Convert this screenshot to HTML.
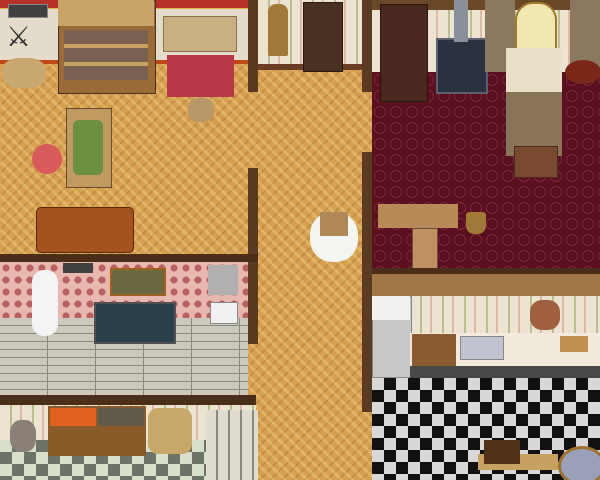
<!DOCTYPE html>
<html><head><style>
*{margin:0;padding:0}
html,body{width:600px;height:480px;overflow:hidden}
body{position:relative;background:#d49a4c}
div{position:absolute}
.wood{background-color:#d6a050;background-image:repeating-linear-gradient(45deg,rgba(255,230,160,.28) 0 3px,transparent 3px 8px),repeating-linear-gradient(-45deg,rgba(120,70,20,.2) 0 2px,transparent 2px 8px)}
.wallp{background-color:#ece4d0;background-image:repeating-linear-gradient(90deg,#ece4d0 0 10px,#b8c090 10px 12px,#ece4d0 12px 20px,#e0b8a8 20px 22px)}
.wallb{background:#5a3a22}
.carpet{background-color:#5a1020;background-image:radial-gradient(circle,transparent 5px,#7e2a3a 5px 6px,transparent 6px);background-size:16px 16px}
.chk{background:conic-gradient(#111 25%,#d8d8d8 0 50%,#111 0 75%,#d8d8d8 0);background-size:24px 24px}
.chk2{background:conic-gradient(#6c7468 25%,#d8e0cc 0 50%,#6c7468 0 75%,#d8e0cc 0);background-size:24px 24px}
</style></head><body>
<div class="wood" style="left:0;top:0;width:600px;height:480px"></div>
<div style="left:0;top:0;width:250px;height:62px;background:#e4dccb"></div>
<div style="left:0;top:0;width:250px;height:8px;background:#b8302a;border-bottom:1px solid #e0b040"></div>
<div style="left:0;top:60px;width:250px;height:4px;background:#c04818"></div>
<div style="left:8px;top:4px;width:38px;height:12px;background:#404040;border:1px solid #888"></div>
<div style="left:6px;top:22px;width:44px;height:30px;color:#333;font:28px 'DejaVu Sans',sans-serif;line-height:30px">⚔</div>
<div style="left:2px;top:58px;width:44px;height:30px;background:#c8a870;border-radius:40%"></div>
<div style="left:58px;top:0;width:96px;height:92px;background:#9a6a38;border:1px solid #4a3018"></div>
<div style="left:58px;top:0;width:96px;height:26px;background:#c8a468"></div>
<div style="left:64px;top:30px;width:84px;height:50px;background:repeating-linear-gradient(180deg,#7a6050 0 14px,#c8a060 14px 18px)"></div>
<div style="left:163px;top:16px;width:72px;height:34px;background:#c8b080;border:1px solid #8a7050"></div>
<div style="left:167px;top:55px;width:67px;height:42px;background:#b83848"></div>
<div style="left:188px;top:98px;width:26px;height:24px;background:#b89868;border-radius:40%"></div>
<div style="left:66px;top:108px;width:44px;height:78px;background:#c09a60;border:1px solid #6a4a28"></div>
<div style="left:73px;top:120px;width:30px;height:55px;background:#6a9040;border-radius:6px"></div>
<div style="left:32px;top:144px;width:30px;height:30px;background:#d85a5a;border-radius:50%"></div>
<div style="left:36px;top:207px;width:96px;height:44px;background:#a4521e;border-radius:5px;border:1px solid #5a2808"></div>
<div class="wallp" style="left:258px;top:0;width:104px;height:66px"></div>
<div style="left:258px;top:64px;width:104px;height:6px;background:#6a3e24"></div>
<div style="left:268px;top:4px;width:20px;height:52px;background:#a07838;border-radius:8px 8px 2px 2px"></div>
<div style="left:303px;top:2px;width:38px;height:68px;background:#4a3020;border:1px solid #2a1a10"></div>
<div class="wallb" style="left:248px;top:0;width:10px;height:92px"></div>
<div class="wallb" style="left:248px;top:168px;width:10px;height:176px"></div>
<div class="wallb" style="left:362px;top:0;width:10px;height:92px"></div>
<div class="wallb" style="left:362px;top:152px;width:10px;height:260px"></div>
<div style="left:310px;top:212px;width:48px;height:50px;background:#f4f4f0;border-radius:45%"></div>
<div style="left:320px;top:212px;width:28px;height:24px;background:#b08858"></div>
<div class="wallp" style="left:372px;top:0;width:228px;height:72px"></div>
<div style="left:372px;top:0;width:228px;height:10px;background:#6a4828"></div>
<div class="carpet" style="left:372px;top:72px;width:228px;height:198px"></div>
<div style="left:380px;top:4px;width:46px;height:96px;background:#4a2a20;border:1px solid #2a1610"></div>
<div style="left:436px;top:38px;width:48px;height:52px;background:#2a3240;border:2px solid #5a6070"></div>
<div style="left:454px;top:0;width:14px;height:42px;background:#8a909a"></div>
<div style="left:485px;top:0;width:30px;height:72px;background:#8a7860"></div>
<div style="left:570px;top:0;width:30px;height:70px;background:#8a7860"></div>
<div style="left:515px;top:2px;width:38px;height:44px;background:#f0e8b0;border:2px solid #a07828;border-radius:18px 18px 0 0"></div>
<div style="left:506px;top:48px;width:56px;height:108px;background:#8a7458"></div>
<div style="left:506px;top:48px;width:56px;height:44px;background:#e8e0c8"></div>
<div style="left:514px;top:146px;width:42px;height:30px;background:#7a4a30;border:1px solid #4a2a18"></div>
<div style="left:565px;top:60px;width:36px;height:24px;background:#7a2818;border-radius:50%"></div>
<div style="left:378px;top:204px;width:80px;height:24px;background:#b88a58"></div>
<div style="left:412px;top:228px;width:24px;height:40px;background:#c09060;border:1px solid #6a5040"></div>
<div style="left:466px;top:212px;width:20px;height:22px;background:#a07838;border-radius:3px 3px 8px 8px"></div>
<div style="left:372px;top:268px;width:228px;height:6px;background:#4a2e1a"></div>
<div style="left:372px;top:274px;width:228px;height:22px;background:#a07848"></div>
<div class="wallp" style="left:410px;top:296px;width:190px;height:38px"></div>
<div style="left:372px;top:296px;width:38px;height:80px;background:#c8c8c8;border:1px solid #888"></div>
<div style="left:372px;top:296px;width:38px;height:24px;background:#f0f0f0"></div>
<div style="left:410px;top:333px;width:190px;height:36px;background:#f2eadc"></div>
<div style="left:412px;top:334px;width:44px;height:44px;background:#8a5a30"></div>
<div style="left:460px;top:336px;width:42px;height:22px;background:#c0c4d0;border:1px solid #888"></div>
<div style="left:410px;top:366px;width:190px;height:12px;background:#484848"></div>
<div style="left:530px;top:300px;width:30px;height:30px;background:#a06040;border-radius:40%"></div>
<div style="left:560px;top:336px;width:28px;height:16px;background:#c09050"></div>
<div class="chk" style="left:372px;top:378px;width:228px;height:102px"></div>
<div style="left:478px;top:454px;width:80px;height:16px;background:#c8a060"></div>
<div style="left:484px;top:440px;width:36px;height:24px;background:#503018"></div>
<div style="left:558px;top:446px;width:42px;height:34px;background:#9aa0b8;border:3px solid #a07030;border-radius:50%"></div>
<div style="left:0;top:254px;width:258px;height:8px;background:#4a2e1a"></div>
<div style="left:0;top:262px;width:248px;height:56px;background-color:#e8b8b0;background-image:radial-gradient(circle,#b86060 3px,transparent 4px);background-size:12px 12px"></div>
<div style="left:0;top:318px;width:248px;height:78px;background-color:#cccabc;background-image:repeating-linear-gradient(180deg,transparent 0 7px,#8a8a80 7px 8px),repeating-linear-gradient(90deg,transparent 0 47px,#8a8a80 47px 48px)"></div>
<div style="left:63px;top:263px;width:30px;height:10px;background:#404040"></div>
<div style="left:32px;top:270px;width:26px;height:66px;background:#f4f4f4;border-radius:12px"></div>
<div style="left:110px;top:268px;width:52px;height:24px;background:#6a6840;border:2px solid #a06020"></div>
<div style="left:94px;top:302px;width:78px;height:38px;background:#2a4048;border:2px solid #505050"></div>
<div style="left:208px;top:265px;width:30px;height:30px;background:#b0b0b0"></div>
<div style="left:210px;top:302px;width:26px;height:20px;background:#f0f0f0;border:1px solid #888"></div>
<div style="left:0;top:395px;width:256px;height:10px;background:#4a2e1a"></div>
<div class="wallp" style="left:0;top:405px;width:256px;height:35px"></div>
<div class="chk2" style="left:0;top:440px;width:256px;height:40px"></div>
<div style="left:48px;top:406px;width:98px;height:50px;background:#8a5a28"></div>
<div style="left:50px;top:408px;width:46px;height:18px;background:#e06020"></div>
<div style="left:98px;top:408px;width:46px;height:18px;background:#605a48"></div>
<div style="left:148px;top:408px;width:44px;height:46px;background:#c8a868;border-radius:10px"></div>
<div style="left:10px;top:420px;width:26px;height:32px;background:#8a8078;border-radius:40%"></div>
<div style="left:206px;top:410px;width:52px;height:70px;background:repeating-linear-gradient(90deg,#e0dcd0 0 10px,#8a8880 10px 12px)"></div>
</body></html>
